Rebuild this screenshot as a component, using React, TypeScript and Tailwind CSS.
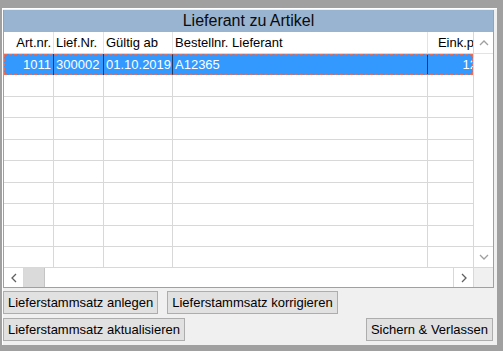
import React from "react";

const FONT = { fontFamily: '"Liberation Sans", Arial, sans-serif' };

type Col = { title: string; w: string; right?: boolean };

const COLS: Col[] = [
  { title: "Art.nr.", w: "w-[50px]", right: true },
  { title: "Lief.Nr.", w: "w-[50px]" },
  { title: "Gültig ab", w: "w-[69px]" },
  { title: "Bestellnr. Lieferant", w: "w-[255px]" },
  { title: "Eink.preis", w: "w-[70px]", right: true },
];

const SELECTED = ["1011", "300002", "01.10.2019", "A12365", "12,50"];

function Chevron({ dir, color = "#a0a0a0" }: { dir: "up" | "down" | "left" | "right"; color?: string }) {
  const d = {
    up: "M1 6 L5 2 L9 6",
    down: "M1 2 L5 6 L9 2",
    left: "M6 1 L2 5 L6 9",
    right: "M2 1 L6 5 L2 9",
  }[dir];
  const vertical = dir === "up" || dir === "down";
  return (
    <svg width={vertical ? 10 : 8} height={vertical ? 8 : 10} viewBox={vertical ? "0 0 10 8" : "0 0 8 10"}>
      <path d={d} fill="none" stroke={color} strokeWidth="1.3" />
    </svg>
  );
}

function WinButton({ children }: { children: React.ReactNode }) {
  return (
    <button className="h-[23px] px-[4px] bg-[#e1e1e1] border border-[#adadad] text-[13px] text-black leading-none whitespace-nowrap">
      {children}
    </button>
  );
}

export default function App() {
  const rows = Array.from({ length: 10 }, (_, i) => i);

  return (
    <div style={FONT} className="w-[503px] h-[351px] bg-[#a0a0a0] pt-[8px] pl-[2px] pr-[6px] pb-[6px] overflow-hidden">
      <div className="h-full bg-[#f0f0f0] border-t border-l border-white pt-[1px] pr-[4px] flex flex-col">
        {/* Grid */}
        <div className="w-[491px] h-[278px] flex flex-col border-x border-b border-[#a0a0a0]">
          <div className="h-[22px] bg-[#99b4d1] flex items-center justify-center text-[16px] text-[#0a0a0a]">
            Lieferant zu Artikel
          </div>

          <div className="flex-1 flex min-h-0">
            {/* data area */}
            <div className="w-[469px] overflow-hidden flex flex-col bg-white">
              <div className="h-[22px] flex shrink-0 border-b border-[#d8d8d8]">
                {COLS.map((c) => (
                  <div
                    key={c.title}
                    className={`${c.w} shrink-0 flex items-center px-[2px] border-r border-[#e3e3e3] text-[13px] text-black whitespace-nowrap overflow-hidden ${
                      c.right ? "justify-end" : ""
                    }`}
                  >
                    {c.title}
                  </div>
                ))}
              </div>

              <div className="flex-1 min-h-0 overflow-hidden">
                {rows.map((r) => {
                  const sel = r === 0;
                  return (
                    <div
                      key={r}
                      className={`flex shrink-0 ${r % 2 === 0 ? "h-[21px]" : "h-[22px]"} ${
                        sel
                          ? "bg-[#3399ff] text-white outline-1 outline-dashed outline-[#e5705e] -outline-offset-1"
                          : "border-b border-[#d8d8d8]"
                      }`}
                    >
                      {COLS.map((c, ci) => (
                        <div
                          key={c.title}
                          className={`${c.w} shrink-0 flex items-center px-[2px] text-[13px] whitespace-nowrap overflow-hidden ${
                            sel ? "border-r border-[#1b3a66]" : "border-r border-[#d8d8d8]"
                          } ${c.right ? "justify-end" : ""}`}
                        >
                          {sel ? SELECTED[ci] : ""}
                        </div>
                      ))}
                    </div>
                  );
                })}
              </div>
            </div>

            {/* vertical scrollbar */}
            <div className="w-[20px] flex flex-col bg-white border-l border-[#d8d8d8]">
              <div className="h-[22px] flex items-center justify-center border-b border-[#e3e3e3]">
                <Chevron dir="up" />
              </div>
              <div className="flex-1" />
              <div className="h-[21px] flex items-center justify-center border-t border-[#d8d8d8]">
                <Chevron dir="down" />
              </div>
            </div>
          </div>

          {/* horizontal scrollbar */}
          <div className="h-[20px] flex border-t border-[#d8d8d8]">
            <div className="w-[469px] flex bg-white">
              <div className="w-[20px] flex items-center justify-center border-r border-[#d8d8d8]">
                <Chevron dir="left" color="#606060" />
              </div>
              <div className="w-[21px] bg-[#dadada] border-r border-[#c4c4c4]" />
              <div className="flex-1" />
              <div className="w-[20px] flex items-center justify-center border-l border-[#d8d8d8]">
                <Chevron dir="right" color="#606060" />
              </div>
            </div>
            <div className="w-[20px] bg-[#f0f0f0] border-l border-[#d8d8d8]" />
          </div>
        </div>

        {/* Buttons */}
        <div className="mt-[3px] flex gap-[9px]">
          <WinButton>Lieferstammsatz anlegen</WinButton>
          <WinButton>Lieferstammsatz korrigieren</WinButton>
        </div>
        <div className="mt-[4px] flex justify-between">
          <WinButton>Lieferstammsatz aktualisieren</WinButton>
          <WinButton>Sichern &amp; Verlassen</WinButton>
        </div>
      </div>
    </div>
  );
}
